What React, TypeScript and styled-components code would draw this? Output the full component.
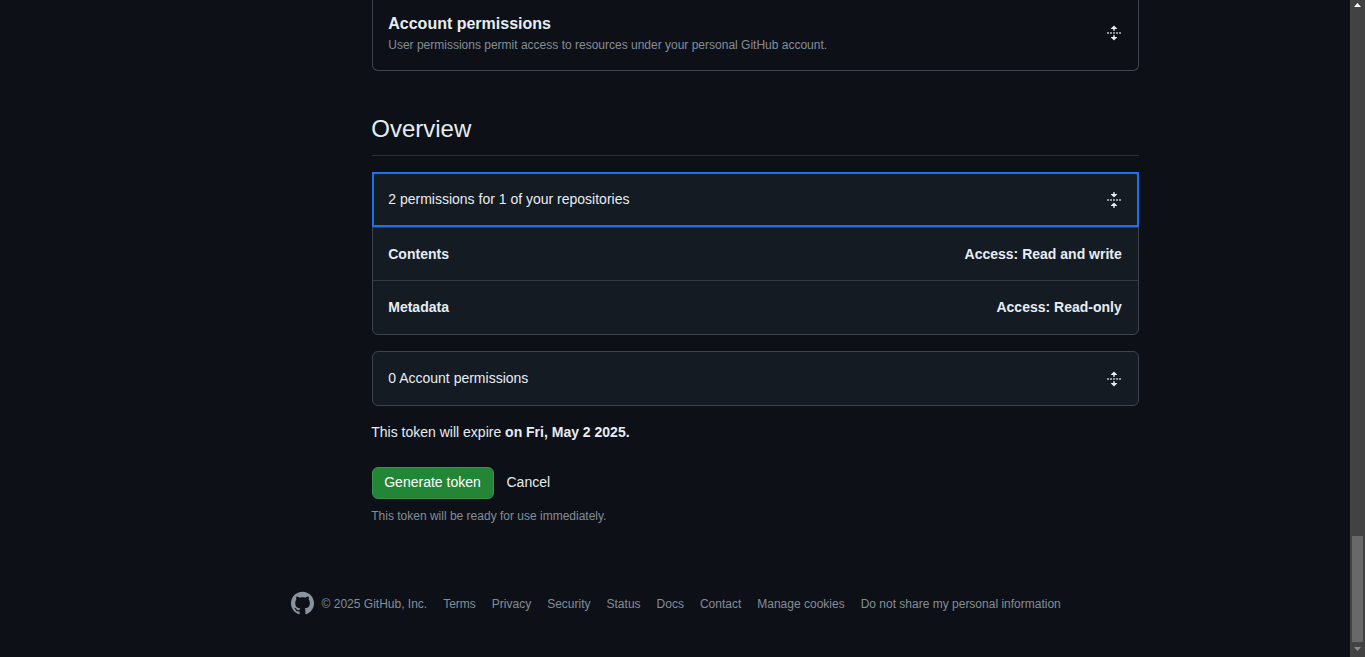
import React from "react";
import styled, { createGlobalStyle } from "styled-components";

const GlobalStyle = createGlobalStyle`
  * { box-sizing: border-box; }
  html, body { margin: 0; background: #0d1117; overflow: hidden; }
  body {
    font-family: "Liberation Sans", Arial, sans-serif;
    font-size: 14px;
    line-height: 21px;
    color: #e6edf3;
  }
`;

const Window = styled.div`
  display: flex;
  height: 657px;
  overflow: hidden;
  background: #0d1117;
`;

const Page = styled.div`
  flex: 1;
  min-width: 0;
`;

const Main = styled.main`
  width: 767.25px;
  margin-left: 371.5px;
`;

const Section = styled.section`
  display: flex;
  justify-content: space-between;
  align-items: flex-start;
  height: 71px;
  padding: 12px 16px 0 15.75px;
  border: 1px solid #3d444d;
  border-top: 0;
  border-radius: 0 0 6px 6px;
`;

const SectionTitle = styled.h3`
  margin: 0;
  font-size: 16px;
  line-height: 24px;
  font-weight: 600;
`;

const Note = styled.p<{ $outdent?: boolean }>`
  margin: 0;
  text-indent: ${(p) => (p.$outdent ? "-0.25px" : "0")};
  font-size: 12px;
  line-height: 18px;
  color: #848d97;
`;

const Heading = styled.h2`
  margin: 40px 0 16px;
  padding-bottom: 8px;
  height: 45px;
  text-indent: -0.25px;
  font-size: 24px;
  line-height: 36px;
  font-weight: 400;
  border-bottom: 1px solid #2b3138;
`;

const Card = styled.div`
  margin-bottom: 16px;
  border: 1px solid #3d444d;
  border-radius: 6px;
  background: #151b23;
`;

const Row = styled.div<{ $height?: number; $strong?: boolean; $divided?: boolean }>`
  display: flex;
  align-items: center;
  justify-content: space-between;
  height: ${(p) => p.$height ?? 53}px;
  padding: 0 16px 0 15.75px;
  font-weight: ${(p) => (p.$strong ? 600 : 400)};
  border-top: ${(p) => (p.$divided ? "1px solid #343b43" : "0")};
`;

const FocusedRow = styled(Row)`
  margin-bottom: 1px;
  outline: 2px solid #1f6feb;
  outline-offset: -1px;
`;

const IconSvg = styled.svg<{ $top?: number }>`
  display: block;
  flex: none;
  fill: currentColor;
  margin-top: ${(p) => p.$top ?? 0}px;
`;

const MarkSvg = styled(IconSvg)`
  color: #8b949e;
`;

const Expiry = styled.p`
  margin: 0;
  text-indent: -0.25px;
`;

const Actions = styled.div`
  display: flex;
  align-items: center;
  gap: 13px;
  margin: 24px 0 8px;
`;

const PrimaryButton = styled.button`
  height: 32px;
  width: 122px;
  padding: 0 0 2px;
  border: 1px solid #39914a;
  border-radius: 6px;
  background: #238636;
  color: #fff;
  font: 500 14px/20px "Liberation Sans", Arial, sans-serif;
  white-space: nowrap;
`;

const CancelLink = styled.a`
  line-height: 20px;
  padding-bottom: 2px;
`;

const Footer = styled.footer`
  display: flex;
  align-items: center;
  margin: 66px 0 0 290px;
  height: 24px;
  font-size: 12px;
  line-height: 18px;
  color: #848d97;
  white-space: nowrap;
`;

const Copyright = styled.span`
  margin: 2px 16px 0 7.6px;
`;

const Links = styled.nav`
  display: flex;
  gap: 16px;
  margin-top: 2px;
`;

const ScrollTrack = styled.div`
  display: flex;
  flex-direction: column;
  justify-content: space-between;
  align-items: center;
  width: 15px;
  height: 657px;
  background: #424242;
`;

const ScrollBottom = styled.div`
  display: flex;
  flex-direction: column;
  align-items: center;
`;

const ScrollThumb = styled.div`
  width: 11px;
  height: 106px;
  background: #686868;
`;

const dots =
  "M2.25 8.75a.75.75 0 0 0 0-1.5h-.5a.75.75 0 0 0 0 1.5h.5ZM6 8a.75.75 0 0 1-.75.75h-.5a.75.75 0 0 1 0-1.5h.5A.75.75 0 0 1 6 8Zm2.25.75a.75.75 0 0 0 0-1.5h-.5a.75.75 0 0 0 0 1.5h.5ZM12 8a.75.75 0 0 1-.75.75h-.5a.75.75 0 0 1 0-1.5h.5A.75.75 0 0 1 12 8Zm2.25.75a.75.75 0 0 0 0-1.5h-.5a.75.75 0 0 0 0 1.5h.5Z";
const unfold =
  "m8.177.677 2.896 2.896a.25.25 0 0 1-.177.427H8.75v1.25a.75.75 0 0 1-1.5 0V4H5.104a.25.25 0 0 1-.177-.427L7.823.677a.25.25 0 0 1 .354 0ZM7.25 10.75a.75.75 0 0 1 1.5 0V12h2.146a.25.25 0 0 1 .177.427l-2.896 2.896a.25.25 0 0 1-.354 0l-2.896-2.896A.25.25 0 0 1 5.104 12H7.25v-1.25Z";
const fold =
  "M10.896 2H8.75V.75a.75.75 0 0 0-1.5 0V2H5.104a.25.25 0 0 0-.177.427l2.896 2.896a.25.25 0 0 0 .354 0l2.896-2.896A.25.25 0 0 0 10.896 2ZM8.75 15.25a.75.75 0 0 1-1.5 0V14H5.104a.25.25 0 0 1-.177-.427l2.896-2.896a.25.25 0 0 1 .354 0l2.896 2.896a.25.25 0 0 1-.177.427H8.75v1.25Z";
const mark =
  "M12.5.75C6.146.75 1 5.896 1 12.25c0 5.089 3.292 9.387 7.863 10.91.575.101.79-.244.79-.546 0-.273-.014-1.178-.014-2.142-2.889.532-3.636-.704-3.866-1.35-.13-.331-.69-1.352-1.18-1.625-.402-.216-.977-.748-.014-.762.906-.014 1.553.834 1.769 1.179 1.035 1.74 2.688 1.25 3.349.948.1-.747.402-1.25.733-1.538-2.559-.287-5.232-1.279-5.232-5.678 0-1.25.445-2.285 1.178-3.09-.115-.288-.517-1.467.115-3.048 0 0 .963-.302 3.163 1.179.92-.259 1.897-.388 2.875-.388.977 0 1.955.13 2.875.388 2.2-1.495 3.162-1.179 3.162-1.179.633 1.581.23 2.76.115 3.048.733.805 1.179 1.825 1.179 3.09 0 4.413-2.688 5.39-5.247 5.678.417.36.776 1.05.776 2.128 0 1.538-.014 2.774-.014 3.162 0 .302.216.662.79.547C20.709 21.637 24 17.324 24 12.25 24 5.896 18.854.75 12.5.75Z";

function ToggleIcon({ open, top }: { open?: boolean; top?: number }) {
  return (
    <IconSvg width="16" height="16" viewBox="0 0 16 16" $top={top}>
      <path d={open ? fold : unfold} />
      <path d={dots} />
    </IconSvg>
  );
}

const links = [
  "Terms",
  "Privacy",
  "Security",
  "Status",
  "Docs",
  "Contact",
  "Manage cookies",
  "Do not share my personal information",
];

export default function App() {
  return (
    <Window>
      <GlobalStyle />
      <Page>
        <Main>
          <Section>
            <div>
              <SectionTitle>Account permissions</SectionTitle>
              <Note>User permissions permit access to resources under your personal GitHub account.</Note>
            </div>
            <ToggleIcon top={13} />
          </Section>
          <Heading>Overview</Heading>
          <Card>
            <FocusedRow>
              <span>2 permissions for 1 of your repositories</span>
              <ToggleIcon open top={1} />
            </FocusedRow>
            <Row $strong $divided $height={53}>
              <span>Contents</span>
              <span>Access: Read and write</span>
            </Row>
            <Row $strong $divided $height={54}>
              <span>Metadata</span>
              <span>Access: Read-only</span>
            </Row>
          </Card>
          <Card>
            <Row>
              <span>0 Account permissions</span>
              <ToggleIcon top={1} />
            </Row>
          </Card>
          <Expiry>
            This token will expire <strong>on Fri, May 2 2025.</strong>
          </Expiry>
          <Actions>
            <PrimaryButton>Generate token</PrimaryButton>
            <CancelLink>Cancel</CancelLink>
          </Actions>
          <Note $outdent>This token will be ready for use immediately.</Note>
        </Main>
        <Footer>
          <MarkSvg width="24" height="24" viewBox="0 0 24 24">
            <path d={mark} />
          </MarkSvg>
          <Copyright>© 2025 GitHub, Inc.</Copyright>
          <Links>
            {links.map((label) => (
              <a key={label}>{label}</a>
            ))}
          </Links>
        </Footer>
      </Page>
      <ScrollTrack>
        <svg width="15" height="15" viewBox="0 0 15 15">
          <path d="M7.5 3 11 7H4Z" fill="#fff" />
        </svg>
        <ScrollBottom>
          <ScrollThumb />
          <svg width="15" height="15" viewBox="0 0 15 15">
            <path d="M4 5h7L7.5 9Z" fill="#8b8b8b" />
          </svg>
        </ScrollBottom>
      </ScrollTrack>
    </Window>
  );
}
